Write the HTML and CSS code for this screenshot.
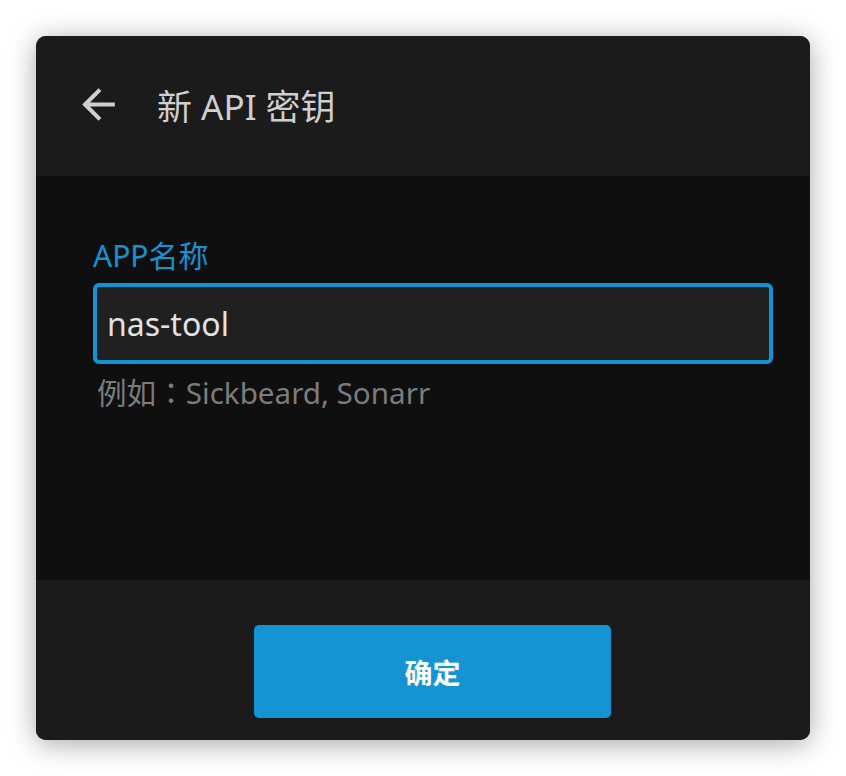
FILE: index.html
```html
<!DOCTYPE html>
<html lang="zh">
<head>
<meta charset="utf-8">
<link rel="stylesheet" href="styles.css">
</head>
<body>
<div class="window">
  <header class="topbar">
    <svg class="back" viewBox="0 0 24 24" width="49" height="49"><path d="M20 11H7.83l5.59-5.59L12 4l-8 8 8 8 1.41-1.41L7.83 13H20v-2z" fill="currentColor"/></svg>
    <h1 class="title">新 API 密钥</h1>
  </header>
  <main class="content">
    <label class="label">APP名称</label>
    <div class="field">nas-tool</div>
    <div class="hint">例如<span class="colon" lang="zh-Hant">：</span>Sickbeard, Sonarr</div>
  </main>
  <footer class="footer">
    <button class="ok">确定</button>
  </footer>
</div>
</body>
</html>
```
FILE: styles.css
```css
html, body { margin: 0; padding: 0; }
body {
  background: #ffffff;
  padding: 36px;
  font-family: "Noto Sans", "Noto Sans CJK SC", sans-serif;
}
.window {
  width: 774px;
  height: 704px;
  border-radius: 10px;
  overflow: hidden;
  background: #1b1b1b;
  box-shadow: 0 4px 28px rgba(0,0,0,0.35);
  display: flex;
  flex-direction: column;
}
.topbar {
  height: 140px;
  background: #1b1b1b;
  display: flex;
  align-items: center;
  padding-left: 38px;
  box-sizing: border-box;
  color: #cfcfcf;
}
.back { display: block; margin-top: -4px; }
.title {
  margin: 0 0 0 34px;
  font-size: 35px;
  font-weight: 400;
  color: #cfcfcf;
  line-height: 1;
  font-family: "Noto Sans", "Noto Sans CJK SC", sans-serif;
}
.content {
  height: 404px;
  background: #0f0f0f;
  padding: 60px 37px 0 57px;
  box-sizing: border-box;
  display: flex;
  flex-direction: column;
}
.label {
  font-size: 30px;
  line-height: 40px;
  color: #1592d4;
}
.field {
  margin-top: 7px;
  height: 81px;
  box-sizing: border-box;
  border: 4px solid #1592d4;
  border-radius: 6px;
  background: #202020;
  color: #e2e2e2;
  font-size: 32px;
  display: flex;
  align-items: center;
  padding-left: 10px;
}
.hint {
  margin-top: 8px;
  padding-left: 4px;
  font-size: 29.6px;
  line-height: 40px;
  color: #7c7c7c;
}
.colon { font-family: "Noto Sans CJK TC", sans-serif; }
.footer {
  flex: 1;
  background: #1b1b1b;
  padding: 45px 0 0 218px;
  box-sizing: border-box;
}
.ok {
  width: 357px;
  height: 93px;
  border: none;
  border-radius: 5px;
  background: #1594d4;
  color: #ffffff;
  font-size: 28px;
  font-weight: 700;
  font-family: "Noto Sans CJK SC", sans-serif;
}
```
